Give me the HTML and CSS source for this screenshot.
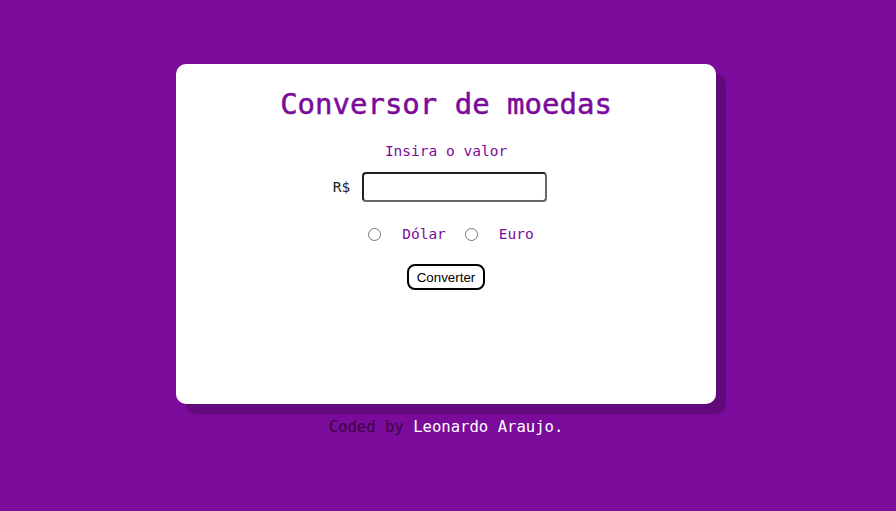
FILE: index.html
```html
<!DOCTYPE html>
<html lang="pt-BR">
<head>
<meta charset="utf-8">
<title>Conversor de moedas</title>
<link rel="stylesheet" href="styles.css">
</head>
<body>
<main class="page">
  <section class="card">
    <h1 class="title">Conversor de moedas</h1>
    <p class="label">Insira o valor</p>
    <div class="value-row">
      <span class="currency">R$</span>
      <input class="value-input" type="text">
    </div>
    <div class="radio-row">
      <label class="option"><input type="radio" name="moeda" class="radio"><span>Dólar</span></label>
      <label class="option"><input type="radio" name="moeda" class="radio"><span>Euro</span></label>
    </div>
    <button class="convert" type="button">Converter</button>
  </section>
  <footer class="footer">Coded by <span class="author">Leonardo Araujo.</span></footer>
</main>
</body>
</html>
```
FILE: styles.css
```css
html, body {
  margin: 0;
  padding: 0;
}
body {
  background: #7b0b9b;
  font-family: "DejaVu Sans Mono", "Liberation Mono", monospace;
  min-height: 511px;
}
.page {
  display: flex;
  flex-direction: column;
  align-items: center;
  padding-top: 64px;
  padding-right: 4px;
}
.card {
  width: 540px;
  height: 340px;
  box-sizing: border-box;
  background: #ffffff;
  border-radius: 10px;
  box-shadow: 10px 10px 0 #620a7c;
  display: flex;
  flex-direction: column;
  align-items: center;
  padding-top: 22px;
}
.title {
  margin: 0;
  font-size: 29px;
  font-weight: normal;
  -webkit-text-stroke: 0.5px #7b0b9b;
  color: #7b0b9b;
  line-height: 36px;
}
.label {
  margin: 20px 0 0 0;
  font-size: 14.5px;
  color: #7b0b9b;
  line-height: 18px;
}
.value-row {
  display: flex;
  align-items: center;
  gap: 12px;
  margin-top: 12px;
  margin-left: -12px;
}
.currency {
  font-size: 14.5px;
  color: #222;
}
.value-input {
  width: 185px;
  height: 30px;
  box-sizing: border-box;
  border: 2px solid #666;
  border-top-color: #222;
  border-left-color: #222;
  border-radius: 4px;
  padding: 0 6px;
  outline: none;
}
.radio-row {
  display: flex;
  gap: 19px;
  margin-top: 24px;
  margin-left: 10px;
}
.option {
  display: flex;
  align-items: center;
  font-size: 14.5px;
  color: #7b0b9b;
}
.radio {
  margin: 0 21px 0 0;
  width: 13px;
  height: 13px;
}
.convert {
  margin-top: 22px;
  height: 26px;
  width: 78px;
  box-sizing: border-box;
  border: 2px solid #000;
  border-radius: 8px;
  background: #fff;
  font-family: "Liberation Sans", Arial, sans-serif;
  font-size: 13.33px;
  color: #000;
  padding: 0;
}
.footer {
  margin-top: 14px;
  font-size: 15.6px;
  color: #3a0545;
}
.author {
  color: #ffffff;
}
```
